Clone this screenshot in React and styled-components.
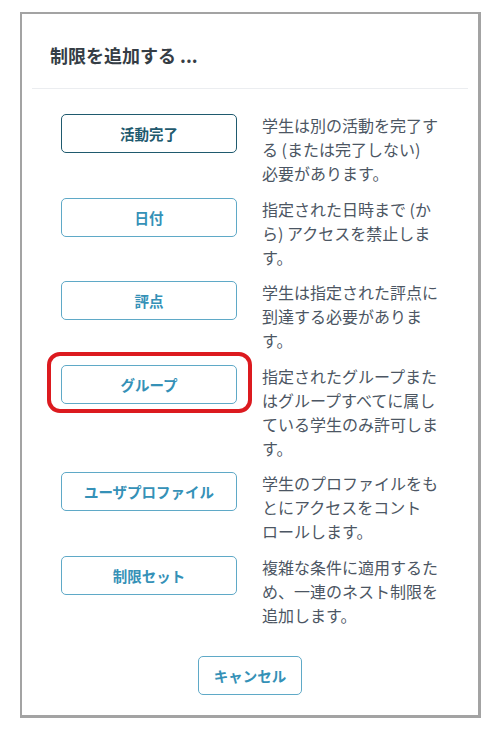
import React from 'react';
import styled, { createGlobalStyle } from 'styled-components';

const GlobalStyle = createGlobalStyle`
  body {
    margin: 0;
    background: #fff;
    font-family: "Noto Sans CJK JP", "Noto Sans", sans-serif;
  }
`;

const Page = styled.div`
  padding: 12px 0 0 20px;
`;

const Modal = styled.div`
  box-sizing: border-box;
  width: 461px;
  height: 706px;
  border: 2px solid #a3a3a3;
  border-right-width: 3px;
  border-bottom-width: 3px;
  background: #fff;
  display: flex;
  flex-direction: column;
`;

const Header = styled.div`
  margin: 0 10px;
  padding: 26px 0 17px 18px;
  border-bottom: 1px solid #ebedf0;
`;

const Title = styled.h2`
  margin: 0;
  font-size: 18px;
  line-height: 31px;
  font-weight: 700;
  color: #353d45;
`;

const Body = styled.div`
  display: flex;
  flex-direction: column;
  gap: 11.6px;
  padding: 24px 0 0 39px;
`;

const Row = styled.div`
  display: flex;
  align-items: flex-start;
  gap: 25px;
`;

const Highlight = styled.div`
  position: relative;
  flex: none;

  ${({ $marked }) =>
    $marked &&
    `
    &::after {
      content: '';
      position: absolute;
      top: -12px;
      bottom: -9px;
      left: -14px;
      right: -15px;
      border: 4px solid #dc1a1f;
      border-radius: 13px;
      pointer-events: none;
    }
  `}
`;

const Button = styled.button`
  box-sizing: border-box;
  width: ${({ $w }) => $w || 176}px;
  height: 39px;
  margin-top: 1px;
  border: 1px solid ${({ $active }) => ($active ? '#1f5a6e' : '#5fa9c7')};
  border-radius: 5px;
  background: #fff;
  color: ${({ $active }) => ($active ? '#1f5a6e' : '#3591b7')};
  font-family: "Noto Sans CJK JP", "Noto Sans", sans-serif;
  font-size: 14.5px;
  font-weight: 700;
  cursor: pointer;
`;

const Desc = styled.p`
  margin: 0;
  width: 192px;
  font-size: 16px;
  line-height: 24px;
  color: #4c5663;
  white-space: nowrap;
`;

const Footer = styled.div`
  display: flex;
  justify-content: center;
  padding-top: 28px;
`;

const items = [
  { label: '活動完了', lines: ['学生は別の活動を完了す', 'る (または完了しない)', '必要があります。'], active: true },
  { label: '日付', lines: ['指定された日時まで (か', 'ら) アクセスを禁止しま', 'す。'] },
  { label: '評点', lines: ['学生は指定された評点に', '到達する必要がありま', 'す。'] },
  { label: 'グループ', lines: ['指定されたグループまた', 'はグループすべてに属し', 'ている学生のみ許可しま', 'す。'], marked: true },
  { label: 'ユーザプロファイル', lines: ['学生のプロファイルをも', 'とにアクセスをコント', 'ロールします。'] },
  { label: '制限セット', lines: ['複雑な条件に適用するた', 'め、一連のネスト制限を', '追加します。'] },
];

export default function App() {
  return (
    <Page>
      <GlobalStyle />
      <Modal>
        <Header>
          <Title>制限を追加する ...</Title>
        </Header>
        <Body>
          {items.map((it) => (
            <Row key={it.label}>
              <Highlight $marked={it.marked}>
                <Button $active={it.active}>{it.label}</Button>
              </Highlight>
              <Desc>
                {it.lines.map((line, i) => (
                  <React.Fragment key={i}>
                    {i > 0 && <br />}
                    {line}
                  </React.Fragment>
                ))}
              </Desc>
            </Row>
          ))}
        </Body>
        <Footer>
          <Button $w={104}>キャンセル</Button>
        </Footer>
      </Modal>
    </Page>
  );
}
